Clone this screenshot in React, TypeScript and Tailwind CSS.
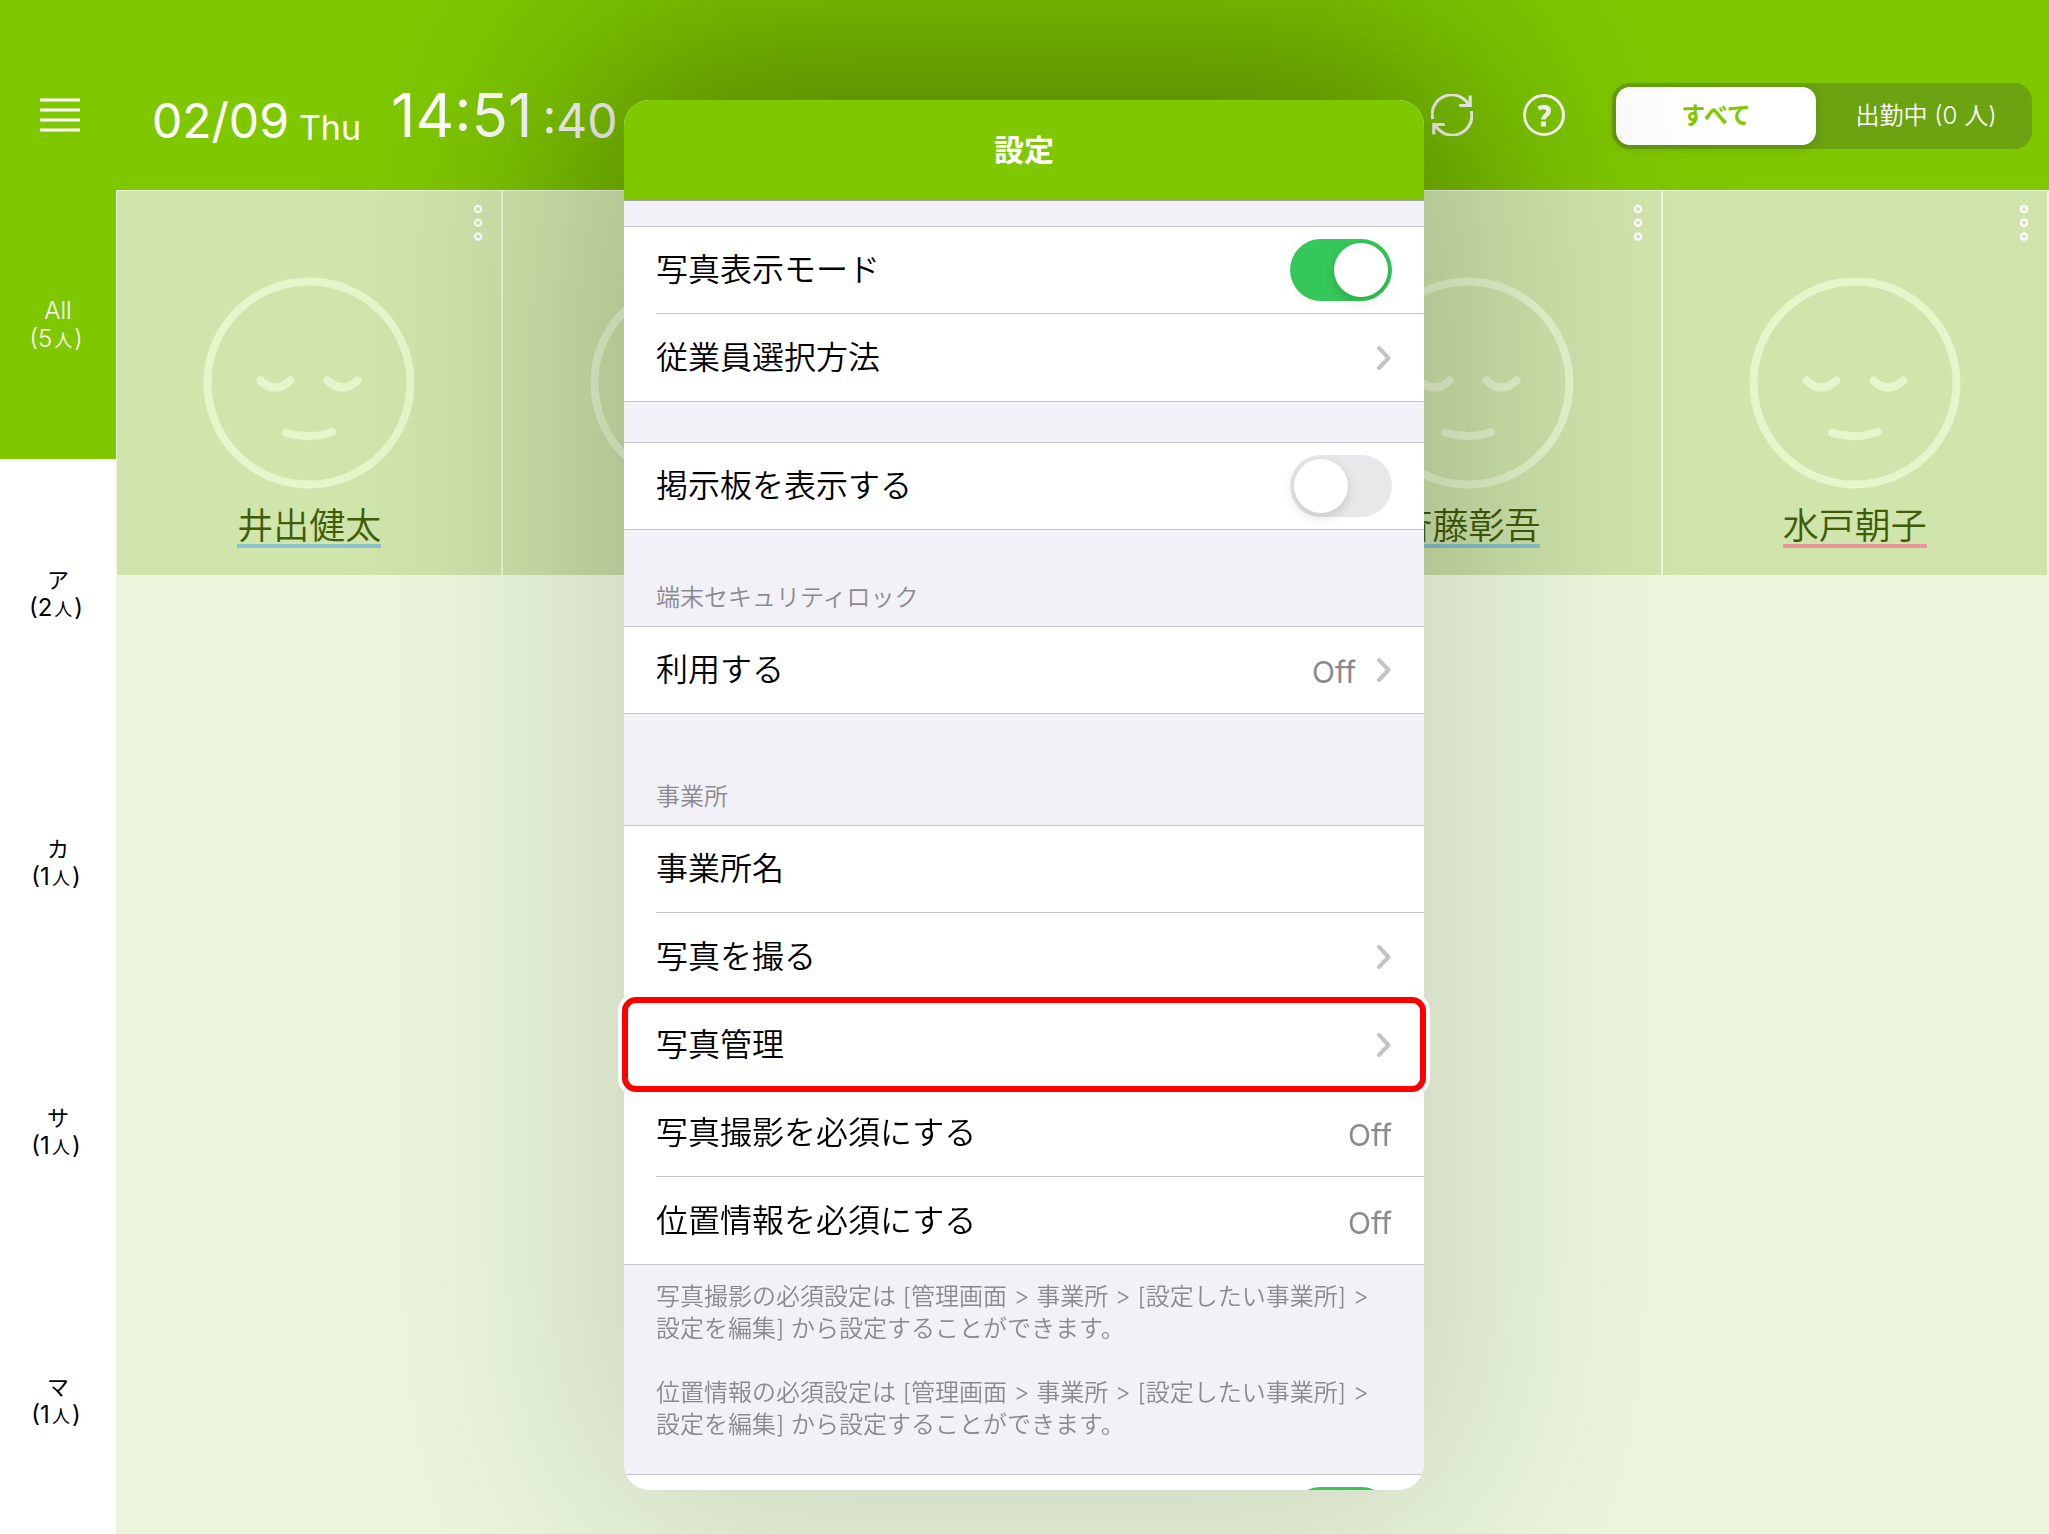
import React from 'react';
import clsx from 'clsx';

interface Employee {
  id: number;
  name?: string;
  underline: string;
}

interface KanaTab {
  label: string;
  count: number;
}

interface SettingRow {
  label: string;
  toggle?: boolean;
  value?: string;
  chevron?: boolean;
}

const BLUE_LINE = 'border-[#8cc3ca]';
const PINK_LINE = 'border-[#e89699]';

// The two cards without a name sit behind the settings sheet
const EMPLOYEES: Employee[] = [
  { id: 1, name: '井出健太', underline: BLUE_LINE },
  { id: 2, underline: BLUE_LINE },
  { id: 3, underline: BLUE_LINE },
  { id: 4, name: '斉藤彰吾', underline: BLUE_LINE },
  { id: 5, name: '水戸朝子', underline: PINK_LINE },
];

const KANA_TABS: KanaTab[] = [
  { label: 'All', count: 5 },
  { label: 'ア', count: 2 },
  { label: 'カ', count: 1 },
  { label: 'サ', count: 1 },
  { label: 'マ', count: 1 },
];

const DISPLAY_ROWS: SettingRow[] = [
  { label: '写真表示モード', toggle: true },
  { label: '従業員選択方法', chevron: true },
];

const BOARD_ROWS: SettingRow[] = [{ label: '掲示板を表示する', toggle: false }];

const LOCK_ROWS: SettingRow[] = [{ label: '利用する', value: 'Off', chevron: true }];

const OFFICE_ROWS: SettingRow[] = [
  { label: '事業所名' },
  { label: '写真を撮る', chevron: true },
  { label: '写真管理', chevron: true },
  { label: '写真撮影を必須にする', value: 'Off' },
  { label: '位置情報を必須にする', value: 'Off' },
];

// Soft shadow behind the settings sheet, clipped by the parent's clip-path
function SheetShade({ className }: { className: string }) {
  return (
    <div
      className={clsx(
        'pointer-events-none fixed top-[100px] right-px bottom-11 left-0 mx-auto w-[800px] rounded-[26px]',
        className
      )}
    />
  );
}

function MenuIcon() {
  return (
    <svg width="40" height="34" viewBox="0 0 40 34" stroke="currentColor" strokeWidth="3">
      <path d="M0 2h40M0 12h40M0 22h40M0 32h40" />
    </svg>
  );
}

function RefreshIcon() {
  return (
    <svg width="42" height="42" viewBox="0 0 42 42" fill="none" stroke="currentColor" strokeWidth="3">
      <path d="M1.700 25A19.500 19.500 0 0 1 38 11.500M40.300 17A19.500 19.500 0 0 1 4 30.500" />
      <path d="M39.200 1.500v10h-11M2.800 40.500v-10h11" strokeWidth="3.200" />
      <path d="M33 11.500l6-5v5zM9 30.500l-6 5v-5z" fill="currentColor" stroke="none" />
    </svg>
  );
}

function HelpIcon() {
  return (
    <svg width="44" height="44" viewBox="0 0 44 44" fill="none" stroke="currentColor" strokeWidth="3">
      <circle cx="22" cy="22" r="19.500" />
      <path
        d="M16.500 15.700c1.700-1.100 3.500-1.600 5.200-1.600 3.300 0 5 1.600 5 4 0 4.200-5.300 4-5.300 8.400"
        strokeWidth="4.500"
      />
      <path d="M21.400 28.500v5" strokeWidth="5" />
    </svg>
  );
}

function DotsIcon() {
  return (
    <svg width="10" height="38" viewBox="0 0 10 38" fill="none" stroke="currentColor" strokeWidth="2.300">
      <circle cx="5" cy="5" r="3.100" />
      <circle cx="5" cy="18.700" r="3.100" />
      <circle cx="5" cy="32.400" r="3.100" />
    </svg>
  );
}

function FaceIcon() {
  return (
    <svg
      className="text-[#e6f6cb]"
      width="212"
      height="212"
      viewBox="0 0 212 212"
      fill="none"
      stroke="currentColor"
      strokeWidth="8"
      strokeLinecap="round"
    >
      <circle cx="106" cy="106" r="101.500" />
      <path d="M57.500 103.500Q72.500 117.500 87.500 103.500" />
      <path d="M124.500 103.500Q139.500 117.500 154.500 103.500" />
      <path d="M83 155.500Q106 163 129 155" />
    </svg>
  );
}

function ChevronIcon() {
  return (
    <svg
      className="text-[#c4c4c7]"
      width="16"
      height="26"
      viewBox="0 0 16 26"
      fill="none"
      stroke="currentColor"
      strokeWidth="4"
      strokeLinecap="round"
      strokeLinejoin="round"
    >
      <path d="M3 3l9.500 10L3 23" />
    </svg>
  );
}

function Toggle({ label, on }: { label: string; on: boolean }) {
  return (
    <input
      type="checkbox"
      role="switch"
      aria-label={label}
      defaultChecked={on}
      className="h-[62px] w-[102px] shrink-0 appearance-none rounded-full bg-[#e8e8ea] p-1 before:block before:size-[54px] before:rounded-full before:bg-white before:shadow-[0_4px_12px_rgba(0,0,0,0.15)] checked:bg-[#35c759] checked:before:ml-10"
    />
  );
}

function Row({ row, first, last }: { row: SettingRow; first: boolean; last: boolean }) {
  const content = (
    <>
      <span className="flex-1 text-left font-[350]">{row.label}</span>
      {row.value && <span className="pt-1 text-[30px] text-[#8a8a8e]">{row.value}</span>}
      {row.chevron && <ChevronIcon />}
      {row.toggle !== undefined && <Toggle label={row.label} on={row.toggle} />}
    </>
  );

  return (
    <li
      className={clsx(
        'h-22 border-[#c6c6c8] bg-white pl-8 text-[32px] leading-10 text-black',
        first && 'border-t',
        last && 'border-b'
      )}
    >
      <div className={clsx('flex h-full items-center border-[#c6c6c8] pr-8', !last && 'border-b')}>
        {row.chevron ? (
          <button type="button" className="flex h-full flex-1 items-center gap-5">
            {content}
          </button>
        ) : (
          content
        )}
      </div>
    </li>
  );
}

function RowGroup({ rows }: { rows: SettingRow[] }) {
  return (
    <ul>
      {rows.map((row, index) => (
        <Row key={row.label} row={row} first={index === 0} last={index === rows.length - 1} />
      ))}
    </ul>
  );
}

function SettingsSheet() {
  return (
    <div className="fixed top-[100px] right-px bottom-11 left-0 mx-auto w-[800px]">
      <section
        role="dialog"
        aria-label="設定"
        className="flex h-full flex-col overflow-hidden rounded-[26px] bg-[#f2f1f7]"
      >
        <header className="flex h-[101px] shrink-0 items-center justify-center border-b border-[#a3a3ab] bg-[#7fc800]">
          <h1 className="text-[30px] leading-10 font-bold text-white">設定</h1>
        </header>

        <div className="flex-1 overflow-hidden pt-[25px] text-[24px] text-[#8a8a8e]">
          <RowGroup rows={DISPLAY_ROWS} />
          <div className="h-10" />
          <RowGroup rows={BOARD_ROWS} />
          <h2 className="flex h-24 items-end px-8 pb-4 leading-6 font-[350]">端末セキュリティロック</h2>
          <RowGroup rows={LOCK_ROWS} />
          <h2 className="flex h-[111px] items-end px-8 pb-4 leading-6 font-[350]">事業所</h2>
          <RowGroup rows={OFFICE_ROWS} />
          <div className="flex flex-col gap-8 px-8 pt-4 pb-[33px] leading-8 font-[350]">
            <p>写真撮影の必須設定は [管理画面 &gt; 事業所 &gt; [設定したい事業所] &gt; 設定を編集] から設定することができます。</p>
            <p>位置情報の必須設定は [管理画面 &gt; 事業所 &gt; [設定したい事業所] &gt; 設定を編集] から設定することができます。</p>
          </div>
          <RowGroup rows={[{ label: '', toggle: true }]} />
        </div>
      </section>

      {/* Marker round the photo management row */}
      <div className="pointer-events-none absolute -inset-x-0.5 top-[897px] h-[95px] rounded-[14px] border-6 border-[#ff0000] shadow-[0_0_0_4px_#ffffff]" />
    </div>
  );
}

function TopBar() {
  return (
    <header className="flex h-[190px] shrink-0 items-center bg-[#7fc800] pt-10 pr-[17px] text-white [clip-path:inset(0)]">
      <div className="flex w-[116px] justify-center pl-1">
        <button type="button" aria-label="メニュー">
          <MenuIcon />
        </button>
      </div>
      <time className="flex flex-1 items-end pl-9">
        <span className="text-[48px] leading-none">02/09</span>
        <span className="ml-2.5 text-[34px] leading-none">Thu</span>
        <span className="ml-[30px] text-[60px] leading-none">14:51</span>
        <span className="ml-2.5 text-[48px] leading-none">:40</span>
      </time>
      <div className="flex items-center">
        <button type="button" aria-label="更新">
          <RefreshIcon />
        </button>
        <button type="button" aria-label="ヘルプ" className="ml-[49px]">
          <HelpIcon />
        </button>
        <div className="mt-0.5 ml-[46px] grid w-[420px] grid-cols-[200px_1fr] gap-2 rounded-[18px] bg-[#6ca311] p-1 text-[24px]">
          <button
            type="button"
            className="h-[58px] rounded-[14px] bg-white font-bold text-[#7fc800] shadow-[0_3px_12px_rgba(0,0,0,0.15)]"
          >
            すべて
          </button>
          <button type="button" className="h-[58px] font-[350]">
            出勤中 (0 人)
          </button>
        </div>
      </div>
      <SheetShade className="shadow-[0_0_240px_40px_rgba(0,0,0,0.4)]" />
    </header>
  );
}

function Sidebar() {
  return (
    <nav className="flex w-[116px] shrink-0 flex-col">
      {KANA_TABS.map((tab, index) => (
        <button
          key={tab.label}
          type="button"
          className={clsx(
            'flex flex-1 flex-col items-center justify-center pt-1 text-[24px] leading-7',
            index === 0 ? 'bg-[#7fc800] font-[350] text-white' : 'bg-white text-black'
          )}
        >
          <span className={clsx(index > 0 && 'text-[22px]')}>{tab.label}</span>
          <span className="pr-1">
            ({tab.count}
            <span className="mx-0.5 text-[18px]">人</span>)
          </span>
        </button>
      ))}
    </nav>
  );
}

export default function App() {
  return (
    <div
      lang="ja"
      className="flex h-screen flex-col overflow-hidden bg-[#ebf6dd] font-[Inter,'Noto_Sans_CJK_JP',sans-serif]"
    >
      <TopBar />
      <div className="flex flex-1">
        <Sidebar />
        <main className="flex flex-1 flex-col">
          <div className="grid grid-cols-5 gap-0.5 bg-[#ebf6dd] pt-px pr-0.5 pl-px [clip-path:inset(0)]">
            {EMPLOYEES.map((employee) => (
              <article
                key={employee.id}
                className="relative flex h-96 flex-col items-center bg-[#cfe5ab] pt-[86px]"
              >
                <button type="button" aria-label="その他" className="absolute top-[13px] right-[18px] text-white">
                  <DotsIcon />
                </button>
                <FaceIcon />
                {employee.name && (
                  <p
                    className={clsx(
                      'mt-[19px] border-b-4 text-[36px] leading-9 font-[350] text-[#3f5c07]',
                      employee.underline
                    )}
                  >
                    {employee.name}
                  </p>
                )}
              </article>
            ))}
            <SheetShade className="shadow-[0_0_240px_40px_rgba(0,0,0,0.22)]" />
          </div>
          <div className="flex-1 [clip-path:inset(0)]">
            <SheetShade className="shadow-[0_0_240px_40px_rgba(0,0,0,0.14)]" />
          </div>
        </main>
      </div>
      <SettingsSheet />
    </div>
  );
}
